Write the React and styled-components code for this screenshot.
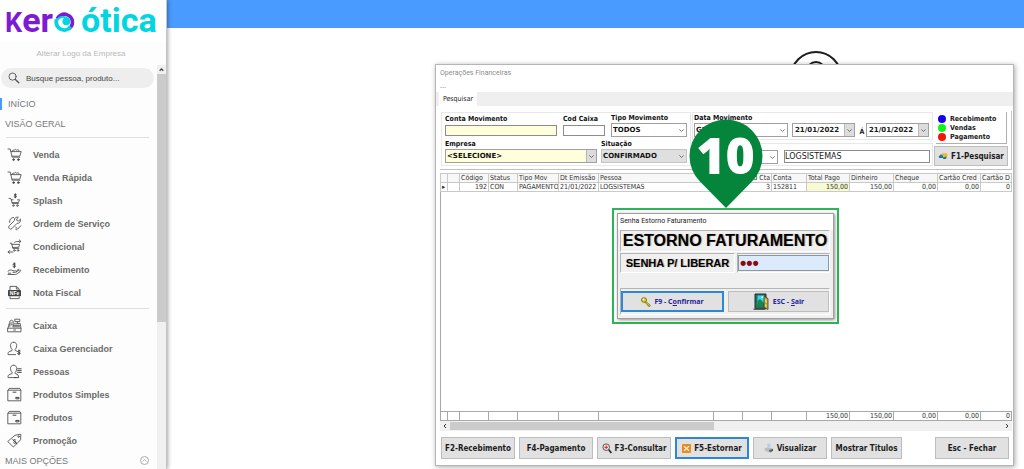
import React from "react";
import styled, { createGlobalStyle } from "styled-components";

const UI = '"DejaVu Sans Condensed", "DejaVu Sans", sans-serif';
const WIDE = '"DejaVu Sans", sans-serif';
const SANS = '"Liberation Sans", Arial, sans-serif';
const CAPTION = 'Roboto, "Open Sans", sans-serif';

const Global = createGlobalStyle`
  *, *::before, *::after { box-sizing: border-box; }
  html, body { margin: 0; padding: 0; background: #fff; }
  body { font-family: ${SANS}; color: #1a1a1a; overflow: hidden; }
  button, input, select { font: inherit; color: inherit; margin: 0; padding: 0; }
`;

const Page = styled.div`
  display: flex;
  height: 100vh;
  overflow: hidden;
`;

/* ---------- sidebar ---------- */

const Sidebar = styled.aside`
  position: relative;
  z-index: 1;
  flex: none;
  display: flex;
  flex-direction: column;
  width: 167px;
  background: #fdfdfd;
  border-right: 1px solid #c4c4c4;
  box-shadow: 1px 0 4px rgba(0, 0, 0, 0.35);
`;

const Brand = styled.div`
  display: flex;
  align-items: baseline;
  height: 41px;
  padding: 2px 0 0 5px;
  background: #fff;
  font-family: Roboto, sans-serif;
  font-weight: 700;
  font-size: 34px;
  line-height: 37px;
  color: #7d1bd2;
`;

const BrandCap = styled.span`
  font-size: 27px;
`;

const BrandAccent = styled.span`
  color: #00d5e2;
  margin-left: 6px;
`;

const BrandEye = styled.svg`
  flex: none;
  width: 21px;
  height: 21px;
  align-self: flex-start;
  margin: 9px 0 0 1px;
`;

const LogoLink = styled.a`
  height: 24px;
  padding-right: 4px;
  line-height: 25px;
  font-size: 8px;
  text-align: center;
  text-decoration: none;
  color: #b8b8b8;
`;

const SidebarBody = styled.div`
  flex: 1;
  min-height: 0;
  display: flex;
`;

const Menu = styled.nav`
  flex: 1;
  min-width: 0;
  padding-top: 3px;
`;

const Search = styled.label`
  display: flex;
  align-items: center;
  gap: 6px;
  height: 20px;
  margin: 0 3px 0 1px;
  padding: 0 7px;
  border-radius: 10px;
  background: #eeeeee;
`;

const SearchInput = styled.input`
  flex: 1;
  min-width: 0;
  border: 0;
  outline: 0;
  background: none;
  font-size: 8px;
  color: #555;
  &::placeholder { color: #444; opacity: 1; }
`;

const Section = styled.a`
  display: flex;
  align-items: center;
  justify-content: space-between;
  height: ${(p) => p.$h || 20}px;
  padding: 0 8px 0 5px;
  font-size: 9px;
  color: #777;
  text-decoration: none;
`;

const HomeLink = styled(Section)`
  height: 12px;
  margin: 10px 0 4px;
  padding-left: 6px;
  border-left: 2px solid #4a9bff;
`;

const Rule = styled.hr`
  height: 1px;
  margin: ${(p) => p.$m};
  border: 0;
  background: #dedede;
`;

const List = styled.ul`
  margin: 0;
  padding: 0;
  list-style: none;
`;

const Item = styled.a`
  display: flex;
  align-items: center;
  gap: 11px;
  height: 23px;
  padding-left: 7px;
  font-size: 9px;
  font-weight: 700;
  color: #6a6a6a;
  text-decoration: none;
  svg { flex: none; width: 15px; height: 15px; }
`;

const VScroll = styled.div`
  width: 9px;
  padding-top: 9px;
  background: #f0f0f0;
`;

const VScrollArrow = styled.svg`
  display: block;
  width: 9px;
  height: 9px;
  margin-top: -9px;
`;

const VThumb = styled.div`
  height: 248px;
  background: #cbcbcb;
`;

/* ---------- main area ---------- */

const Main = styled.main`
  position: relative;
  flex: 1;
  min-width: 0;
  display: flex;
  flex-direction: column;
`;

const TopBar = styled.header`
  flex: none;
  height: 28px;
  background: #4a9bff;
`;

const Emblem = styled.svg`
  position: absolute;
  top: 50px;
  right: 181px;
  width: 54px;
  height: 54px;
`;

const Desk = styled.div`
  display: flex;
  padding: 36px 10px 0 268px;
`;

const Win = styled.section`
  position: relative;
  flex: 1;
  min-width: 0;
  border: 1px solid #b5b5b5;
  background: #fff;
  box-shadow: 1px 1px 5px rgba(0, 0, 0, 0.35);
  font-family: ${UI};
`;

const WinTitle = styled.h1`
  margin: 0;
  padding-left: 4px;
  height: 17px;
  line-height: 17px;
  font-family: ${CAPTION};
  font-weight: 400;
  font-size: 7px;
  color: #8c8c8c;
`;

const WinMenu = styled.div`
  height: 10px;
  padding-left: 4px;
  line-height: 8px;
  font-size: 7px;
  color: #666;
`;

const Tabs = styled.div`
  display: flex;
  height: 14px;
  padding-left: 3px;
  background: #efefef;
`;

const Tab = styled.button`
  width: 38px;
  border: 0;
  background: #fff;
  font-size: 7px;
  color: #222;
`;

const WinBody = styled.div`
  padding: 5px 1px 6px 4px;
`;

const Filters = styled.form`
  display: flex;
  gap: 1px;
  height: 59px;
  padding: 1px 3px 0 1px;
  border-right: 1px solid #c8c8c8;
  border-bottom: 1px solid #c0c0c0;
`;

const Group = styled.div`
  flex: ${(p) => p.$flex || "none"};
  min-width: 0;
  display: flex;
  flex-direction: column;
  gap: ${(p) => p.$gap || 0}px;
  padding: ${(p) => p.$pad || "1px 3px"};
  border: ${(p) => (p.$plain ? "0" : "1px solid #e8e8e8")};
  height: ${(p) => (p.$h ? p.$h + "px" : "54px")};
`;

const Line = styled.div`
  display: flex;
  align-items: flex-end;
  gap: ${(p) => p.$gap}px;
`;

const Field = styled.label`
  flex: none;
  width: ${(p) => p.$w}px;
  display: flex;
  flex-direction: column;
  font-size: 7px;
  font-weight: 700;
  line-height: 9px;
  color: #111;
  white-space: nowrap;
`;

const TextBox = styled.input`
  width: ${(p) => (p.$w ? p.$w + "px" : "100%")};
  height: ${(p) => p.$h || 11}px;
  margin: 1px 0 !important;
  padding: 0 !important;
  border: 1px solid #8c8c8c;
  border-radius: 0;
  outline: 0;
  background: ${(p) => p.$bg || "#fff"};
  font-family: ${WIDE};
  font-size: 8px;
`;

const Combo = styled.span`
  flex: none;
  display: flex;
  width: ${(p) => (p.$w ? p.$w + "px" : "100%")};
  height: 14px;
  border: 1px solid ${(p) => (p.$grey ? "#c4c4c4" : "#a0a0a0")};
  background: ${(p) => p.$bg || "#fff"};
`;

const ComboSelect = styled.select`
  flex: 1;
  min-width: 0;
  padding-left: 1px !important;
  border: 0;
  outline: 0;
  appearance: none;
  background: none;
  font-family: ${WIDE};
  font-size: 7px;
  font-weight: 700;
  line-height: 11px;
`;

const ComboDate = styled.input`
  flex: 1;
  min-width: 0;
  padding-left: 2px !important;
  border: 0;
  outline: 0;
  background: none;
  font-family: ${WIDE};
  font-size: 7px;
  font-weight: 700;
`;

const ComboArrow = styled.span`
  flex: none;
  display: flex;
  align-items: center;
  justify-content: center;
  width: 10px;
  background: ${(p) => (p.$boxed ? "#dcdcdc" : "none")};
  border-left: ${(p) => (p.$boxed ? "1px solid #b8b8b8" : "0")};
  svg { width: 5px; height: 3px; }
`;

const Sep = styled.span`
  width: 6px;
  font-size: 7px;
  font-weight: 700;
  line-height: 10px;
  text-align: center;
`;

const Side = styled.div`
  flex: none;
  width: 74px;
  display: flex;
  flex-direction: column;
  gap: 2px;
`;

const Legend = styled.ul`
  margin: 0 1px 0 2px;
  padding: 2px 0 0 2px;
  height: 32px;
  list-style: none;
  border-right: 1px solid #b0b0b0;
  border-bottom: 1px solid #b0b0b0;
  font-size: 7px;
  font-weight: 700;
`;

const LegendItem = styled.li`
  display: flex;
  align-items: center;
  gap: 4px;
  height: 9px;
  &::before {
    content: "";
    width: 8px;
    height: 8px;
    border-radius: 4px;
    background: ${(p) => p.$c};
  }
`;

const Btn = styled.button`
  display: flex;
  align-items: center;
  justify-content: center;
  gap: 3px;
  flex: none;
  width: ${(p) => p.$w || 74}px;
  height: ${(p) => p.$h || 22}px;
  border: ${(p) => (p.$active ? "2px solid #2d86d6" : "1px solid #bdbdbd")};
  border-radius: 0;
  background: #e1e1e1;
  font-family: ${UI};
  font-size: 8px;
  font-weight: 700;
  color: #1c1c1c;
  white-space: nowrap;
  svg { flex: none; }
`;

const Grid = styled.table`
  width: 100%;
  margin-top: 3px;
  table-layout: fixed;
  border-collapse: collapse;
  border: 1px solid #a8a8a8;
  border-right: 0;
  font-size: 7px;
  line-height: 8px;
  color: #333;
`;

const Cell = styled.td`
  height: 9px;
  padding: 0 1px;
  border: 1px solid ${(p) => (p.$foot ? "#a8a8a8" : "#c9c9c9")};
  background: ${(p) => p.$bg || "#fff"};
  overflow: hidden;
  white-space: nowrap;
  font-weight: 400;
  text-align: ${(p) => (p.$num ? "right" : "left")};
`;

const Filler = styled.td`
  height: 220px;
  padding: 0;
`;

const HScroll = styled.div`
  display: flex;
  align-items: center;
  height: 10px;
  background: #f0f0f0;
  svg { flex: none; width: 10px; height: 8px; }
`;

const HThumb = styled.div`
  width: 264px;
  height: 8px;
  margin-right: auto;
  background: #cbcbcb;
`;

const Actions = styled.div`
  display: flex;
  gap: 4px;
  padding: 6px 3px 0 1px;
  & > :last-child { margin-left: auto; }
`;

/* ---------- callout and dialog ---------- */

const Overlay = styled.div`
  position: absolute;
  top: 54px;
  left: 0;
  right: 0;
  display: flex;
  flex-direction: column;
  align-items: center;
  padding-left: 2px;
`;

const Pin = styled.div`
  position: relative;
  width: 74px;
  height: 89px;
  text-align: center;
  font-family: "Open Sans", sans-serif;
  font-weight: 800;
  font-size: 50px;
  line-height: 73px;
  color: #fff;
  svg { position: absolute; inset: 0; }
  span { position: relative; }
`;

const Highlight = styled.div`
  width: 227px;
  padding: 3px;
  border: 2px solid #2db457;
  background: #fff;
`;

const Dialog = styled.section`
  border: 1px solid #a0a0a0;
  background: #f0f0f0;
  box-shadow: 1px 1px 3px rgba(0, 0, 0, 0.45);
  padding-bottom: 3px;
`;

const DialogTitle = styled.h2`
  margin: 0;
  height: 16px;
  padding-left: 2px;
  background: #fff;
  font-family: ${CAPTION};
  font-weight: 400;
  font-size: 7px;
  line-height: 14px;
  color: #222;
`;

const Panel = styled.div`
  display: flex;
  align-items: center;
  justify-content: center;
  flex: ${(p) => p.$flex || "none"};
  height: ${(p) => p.$h}px;
  border-top: 1px solid #b4b4b4;
  border-left: 1px solid #b4b4b4;
  border-right: 1px solid #fff;
  border-bottom: 1px solid #fff;
  font-family: ${SANS};
  font-weight: 700;
  font-size: ${(p) => p.$size || 11}px;
  color: #000;
  text-shadow: 1px 0 1px rgba(0, 0, 0, 0.3);
  white-space: nowrap;
  gap: 4px;
`;

const DialogBody = styled.div`
  display: flex;
  flex-direction: column;
  padding: 0 3px 0 2px;
`;

const PasswordRow = styled.div`
  display: flex;
  gap: 2px;
  margin: 1px 0 15px;
`;

const Password = styled.input`
  width: 91px;
  height: 16px;
  padding: 0 1px !important;
  border: 1px solid #8a96a3;
  border-radius: 0;
  outline: 0;
  background: #dcebfc;
  font-family: ${SANS};
  font-size: 18px !important;
  line-height: 14px;
  color: #8b0b0b;
`;

const DialogBtn = styled(Btn)`
  flex: 1;
  height: 21px;
  font-family: "Noto Sans", sans-serif;
  font-size: 7px;
  color: #25259a;
`;

/* ---------- icons ---------- */

const Ico = ({ children }) => (
  <svg viewBox="0 0 15 15" fill="none" stroke="#555" strokeWidth="0.9" strokeLinecap="round" strokeLinejoin="round" aria-hidden="true">
    {children}
  </svg>
);

const Cart = () => (
  <Ico>
    <path d="M1 2h2.2l2 8.2h7.6M3.8 4.6h10.4l-1.4 4.6H5" />
    <path d="M5 4.4c.2-1.6 1.6-1.6 2.1-.8.5-1.6 2.2-1.5 2.6-.2.7-1.2 2.4-.8 2.6 1" />
    <circle cx="6.6" cy="12.6" r="0.9" fill="#444" />
    <circle cx="11.4" cy="12.6" r="0.9" fill="#444" />
  </Ico>
);

const Splash = () => (
  <Ico>
    <path d="M2 5.4h1.8l1.5 5.2h6.2M4.4 6.8h1.8M10.600 6.8h2l-1.200 2.800H5.200" />
    <path stroke="#333" d="M9.4 1.600c-.9-.6-2.200-.3-2 .6.200.8 1.900.5 2 1.400.1.900-1.400 1-2.200.4M8.300.8v4" />
    <circle cx="6.4" cy="12.6" r="0.8" />
    <circle cx="10.4" cy="12.6" r="0.8" />
  </Ico>
);

const Tools = () => (
  <Ico>
    <path d="M13.400 3.400L11.600 5 10 4.600 9.600 3l1.800-1.700C9.200.5 7 2.200 7.400 4.600L2.200 9.800a1.900 1.900 0 0 0 2.700 2.700l5.200-5.200c2.400.4 4.100-1.700 3.300-3.900z" />
    <path d="M6.600 1.400C4 1.600 2.200 3.600 2.600 6.400M8.800 11l1.800 2.200 3.200-3.400M8.600 13.200l1.200.8" />
  </Ico>
);

const Conditional = () => (
  <Ico>
    <path d="M3.200 4.200h1.400l1.200 5.200h6M4.8 5.400h7.800l-1 3H5.600M7 3.800C8 2.600 9 2.400 13.600 2.400M12.200.9l1.800 1.500-1.800 1.500M6 13H1.200M2.800 11.5L1 13l1.800 1.500" />
    <circle cx="7.4" cy="11.4" r="0.8" />
    <circle cx="11" cy="11.4" r="0.8" />
  </Ico>
);

const Hand = () => (
  <Ico>
    <path d="M1 9.200c1.800-1.600 3.600-1.600 5-.4h2.800c1.200 0 1.200 1.500 0 1.500H6M9.400 9.600l3.200-1.500c1.200-.4 1.600.6.8 1.200-2 1.600-3.600 3-5 3.200H1M1.400 11.200h2.400M10 8.200l1.600-.9" />
    <path stroke="#333" d="M8.400 1.900c-1-.7-2.400-.3-2.200.6.2.9 2.200.6 2.300 1.600.1 1-1.600 1.100-2.500.4M7.300.8v5" />
  </Ico>
);

const Invoice = () => (
  <svg viewBox="0 0 15 15" aria-hidden="true">
    <path d="M3 5V1.400h6.600L12.200 4v1M3 11.400v2.200h9.200v-2.200M9.400 1.600V4h2.400" fill="none" stroke="#555" strokeWidth="0.9" />
    <rect x="1" y="5" width="13" height="6.200" rx="0.8" fill="#444" />
    <text x="7.500" y="9.800" textAnchor="middle" fontFamily="Liberation Sans" fontWeight="700" fontSize="5" fill="#fff">NFe</text>
  </svg>
);

const Register = () => (
  <Ico>
    <path d="M1 10.200h13v3.600H1zM1 10.200l1.200-4.600M14 10.200l-.8-4.800h-1.600M6.400 7.400h6M6 8.800h6.600M7.400 5.800h4.400M8.200 1.200h4.600v2.400H8.200zM10.400 3.600v2M2.800 8.400V3.200l1.600-1 1.800 1v5M3.800 5h1.400M3.800 6.800h1.400M6.600 12h2" />
  </Ico>
);

const Person = ({ extra }) => (
  <Ico>
    <path d="M6.600 1.200c2 0 3.200 1.400 3.100 3.400-.1 2-1 3.400-1.600 3.900v.9l2 .9M6.600 1.200c-2 0-3.200 1.400-3.100 3.400.1 2 1 3.400 1.600 3.900v1L2 10.800c-.8.4-1 1.200-1 2.800h7.600" />
    {extra}
  </Ico>
);

const CashierManager = () => (
  <Person
    extra={<path stroke="#333" d="M13.200 9.900c-1-.6-2.600-.3-2.400.7.2.9 2.400.6 2.500 1.600.1 1-1.800 1.100-2.700.4M12 9v4.800" />}
  />
);

const People = () => <Person extra={<path stroke="#333" d="M10.600 4.800h3.600M10.600 6.600h3.600M10.600 8.400h3.600M8 13.600h3.600c0-1.800-.4-2.600-1.500-3.200" />} />;

const Box = () => (
  <Ico>
    <path d="M1.200 3.200h12.600v10.600H1.200zM1.200 3.200l1-1.800h10.600l1 1.800" />
    <path stroke="#333" d="M6 5.200h3M9.200 10.400h2.800v1.400H9.200z" />
  </Ico>
);

const Tag = () => (
  <Ico>
    <path d="M8.400 2.200L13.800 1.200 13.600 6.800 6.400 14 1 8.800z" />
    <circle cx="11.600" cy="3.600" r="0.800" />
    <path stroke="#333" d="M8.600 7c-.9-1-2.500-.2-2 .9.500 1 1.900.2 2.300 1.200.4 1.100-1.300 1.900-2.300.8M5.800 6.400l4 4.400" />
  </Ico>
);

const Chevron = () => (
  <svg viewBox="0 0 5 3" fill="none" stroke="#555" strokeWidth="0.8" aria-hidden="true">
    <path d="M0.400 0.400L2.500 2.500 4.600 0.400" />
  </svg>
);

const SearchGlyph = () => (
  <svg width="12" height="12" viewBox="0 0 12 12" fill="none" stroke="#555" strokeLinecap="round" aria-hidden="true">
    <circle cx="4.600" cy="4.600" r="3.600" strokeWidth="0.900" />
    <path d="M7.400 7.400l3.400 3.400" strokeWidth="1.400" />
  </svg>
);

const Binocular = () => (
  <svg width="10" height="8" viewBox="0 0 10 8" aria-hidden="true">
    <path d="M0.500 5L2.500 2.600h2.300L5.500 6H1.500z" fill="#17799b" />
    <path d="M3.600 2.400L5 .8l1.600.8L8 .8l1.600 1.800L9 5 6.400 5.800z" fill="#f2b632" />
    <path d="M4.800 5.400L8.800 4.600 8 7H5.200z" fill="#17799b" />
  </svg>
);

const Magnifier = () => (
  <svg width="10" height="11" viewBox="0 0 10 11" fill="none" aria-hidden="true">
    <circle cx="4.200" cy="4.200" r="3.300" stroke="#444" strokeWidth="0.900" fill="#f6eaea" />
    <path d="M4.200 2.400v3.600M2.400 4.200h3.600" stroke="#d22" strokeWidth="1.100" />
    <path d="M6.800 6.800l2.600 3.200" stroke="#222" strokeWidth="1.600" />
  </svg>
);

const Reverse = () => (
  <svg width="9" height="9" viewBox="0 0 9 9" aria-hidden="true">
    <rect width="9" height="9" rx="1" fill="#ea8a1e" />
    <path d="M2 2.200l5 4.600M7 2.200L2 6.800" stroke="#fff3d8" strokeWidth="1.200" />
  </svg>
);

const Preview = () => (
  <svg width="10" height="10" viewBox="0 0 10 10" aria-hidden="true">
    <path d="M3 1l3-.6.8 3.400-3 .8z" fill="#a9d3ef" />
    <path d="M.6 5.600L4 4.200l4.600 1.200v2L5 9.200.8 7.600z" fill="#b9bcc0" />
    <path d="M5 7.200l3.800-1.400.4 2L6 9.600z" fill="#5d6063" />
  </svg>
);

const Key = () => (
  <svg width="10" height="10" viewBox="0 0 10 10" aria-hidden="true">
    <path d="M4.600 4.200l4.600 4-.4 1.300-1.300-.2-.2-1-1-.1-.2-1.100-2.400-1.700z" fill="#e8d51e" stroke="#55500a" strokeWidth="0.600" />
    <ellipse cx="3" cy="3" rx="2.600" ry="2.300" fill="#e8d51e" stroke="#55500a" strokeWidth="0.700" />
    <circle cx="2.300" cy="2.300" r="0.700" fill="#fff" />
  </svg>
);

const Door = () => (
  <svg width="17" height="18" viewBox="0 0 17 18" aria-hidden="true">
    <path d="M2 1h11v14.500H2z" fill="#2f6b5c" stroke="#12342c" />
    <path d="M4.500 2.500h6.500v9H4.500z" fill="#37d8ee" />
    <path d="M4.500 8l2.500-2 4 4v3.500H4.500z" fill="#138a4a" />
    <circle cx="9.500" cy="4.200" r="1" fill="#fff" />
    <path d="M11 3.500l4 2v11l-4-2z" fill="#b9a24a" stroke="#4c3f12" strokeWidth="0.800" />
    <path d="M12.200 6l1.600 1v3l-1.600-1zM12.200 10.800l1.600 1v2.400l-1.600-1z" fill="#e6d488" />
    <path d="M.5 15.500h12v1.500H.5z" fill="#5a5d60" />
  </svg>
);

/* ---------- data ---------- */

const sales = [
  ["Venda", Cart],
  ["Venda Rápida", Cart],
  ["Splash", Splash],
  ["Ordem de Serviço", Tools],
  ["Condicional", Conditional],
  ["Recebimento", Hand],
  ["Nota Fiscal", Invoice],
];

const records = [
  ["Caixa", Register],
  ["Caixa Gerenciador", CashierManager],
  ["Pessoas", People],
  ["Produtos Simples", Box],
  ["Produtos", Box],
  ["Promoção", Tag],
];

const columns = [
  { w: 7, head: "", cell: "▸", foot: "" },
  { w: 12, head: "", cell: "", foot: "" },
  { w: 29, head: "Código", cell: "192", foot: "", num: true },
  { w: 29, head: "Status", cell: "CON", foot: "" },
  { w: 41, head: "Tipo Mov", cell: "PAGAMENTO", foot: "" },
  { w: 40, head: "Dt Emissão", cell: "21/01/2022", foot: "" },
  { w: 115, head: "Pessoa", cell: "LOGSISTEMAS", foot: "" },
  { w: 29, head: "", cell: "", foot: "" },
  { w: 29, head: "d Cta", headRight: true, cell: "3", foot: "", num: true },
  { w: 35, head: "Conta", cell: "152811", foot: "" },
  { w: 43, head: "Total Pago", cell: "150,00", foot: "150,00", num: true, bg: "#f8fbd2" },
  { w: 44, head: "Dinheiro", cell: "150,00", foot: "150,00", num: true },
  { w: 44, head: "Cheque", cell: "0,00", foot: "0,00", num: true },
  { w: 43, head: "Cartão Cred", cell: "0,00", foot: "0,00", num: true },
  { head: "Cartão D", cell: "0", foot: "0", num: true },
];

const MenuList = ({ items }) => (
  <List>
    {items.map(([label, Icon]) => (
      <li key={label}>
        <Item href="#"><Icon />{label}</Item>
      </li>
    ))}
  </List>
);

const SelectBox = ({ w, bg, grey, boxed, value, label }) => (
  <Combo $w={w} $bg={bg} $grey={grey}>
    <ComboSelect defaultValue={value} aria-label={label}>
      <option>{value}</option>
    </ComboSelect>
    <ComboArrow $boxed={boxed}><Chevron /></ComboArrow>
  </Combo>
);

const DateBox = ({ label }) => (
  <Combo $w={63}>
    <ComboDate defaultValue="21/01/2022" aria-label={label} />
    <ComboArrow $boxed><Chevron /></ComboArrow>
  </Combo>
);

export default function App() {
  return (
    <>
      <Global />
      <Page>
        <Sidebar>
          <Brand>
            <BrandCap>K</BrandCap>
            <span>er</span>
            <BrandEye viewBox="0 0 20 20" fill="none" aria-hidden="true">
              <path d="M3 7.500C4.500 4.300 8 2.400 11.500 3.200 15.200 4.200 17.600 7.200 17.600 10.800c0 2.800-1.500 5-3.800 6.400" stroke="#7d1bd2" strokeWidth="3.400" />
              <path d="M2.400 8c-.8 4 .6 7.600 4 9.300 3.600 1.700 7.500.6 9.400-2.300" stroke="#00d5e2" strokeWidth="3.600" />
              <path d="M2 9.500C4.500 6 8 4.800 12.500 6.500" stroke="#00d5e2" strokeWidth="1.800" />
              <circle cx="11.800" cy="9.800" r="3.700" fill="#00d5e2" />
            </BrandEye>
            <BrandAccent>ótica</BrandAccent>
          </Brand>
          <LogoLink href="#">Alterar Logo da Empresa</LogoLink>
          <SidebarBody>
            <Menu>
              <Search>
                <SearchGlyph />
                <SearchInput type="text" placeholder="Busque pessoa, produto..." aria-label="Busque pessoa, produto" />
              </Search>
              <HomeLink href="#">INÍCIO</HomeLink>
              <Section href="#">VISÃO GERAL</Section>
              <Rule $m="3px 8px 5px 6px" />
              <MenuList items={sales} />
              <Rule $m="4px 8px 5px 6px" />
              <MenuList items={records} />
              <Section href="#" $h={17}>
                MAIS OPÇÕES
                <svg width="9" height="9" viewBox="0 0 9 9" fill="none" stroke="#999" strokeWidth="0.800" aria-hidden="true">
                  <circle cx="4.500" cy="4.500" r="4" />
                  <path d="M2.600 5.300l1.900-1.800 1.900 1.800" />
                </svg>
              </Section>
            </Menu>
            <VScroll>
              <VScrollArrow viewBox="0 0 9 9" fill="none" stroke="#444" strokeWidth="1.300" aria-hidden="true">
                <path d="M2.700 5.700l1.800-1.800 1.800 1.800" />
              </VScrollArrow>
              <VThumb />
            </VScroll>
          </SidebarBody>
        </Sidebar>

        <Main>
          <TopBar />
          <Emblem viewBox="0 0 54 54" fill="none" stroke="#1d1d1d" strokeWidth="2" aria-hidden="true">
            <circle cx="27" cy="27" r="25" />
            <circle cx="27" cy="21" r="9" />
          </Emblem>
          <Desk>
            <Win>
              <WinTitle>Operações Financeiras</WinTitle>
              <WinMenu>...</WinMenu>
              <Tabs role="tablist">
                <Tab type="button" role="tab" aria-selected="true">Pesquisar</Tab>
              </Tabs>
              <WinBody>
                <Filters onSubmit={(e) => e.preventDefault()}>
                  <Group $gap={3}>
                    <Line $gap={6}>
                      <Field $w={112}>Conta Movimento<TextBox $bg="#ffffdc" /></Field>
                      <Field $w={42}>Cod Caixa<TextBox /></Field>
                      <Field $w={76}>Tipo Movimento<SelectBox value="TODOS" /></Field>
                    </Line>
                    <Line $gap={4}>
                      <Field $w={152}>Empresa<SelectBox value="<SELECIONE>" bg="#ffffdc" boxed /></Field>
                      <Field $w={86}>Situação<SelectBox value="CONFIRMADO" bg="#dfdfdf" grey /></Field>
                    </Line>
                  </Group>
                  <Group $flex="1" $plain $gap={3} $pad="0">
                    <Group $h={28} $pad="1px 1px 0">
                      <Line $gap={4}>
                        <Field $w={94}>Data Movimento<SelectBox value="GERAL" /></Field>
                        <DateBox label="Data inicial" />
                        <Line $gap={1}>
                          <Sep>Á</Sep>
                          <DateBox label="Data final" />
                        </Line>
                      </Line>
                    </Group>
                    <Group $h={23} $pad="5px 1px 0">
                      <Line $gap={6}>
                        <SelectBox w={84} value="PESSOA" label="Tipo de busca" />
                        <TextBox $w={146} $h={13} defaultValue="LOGSISTEMAS" aria-label="Pessoa" />
                      </Line>
                    </Group>
                  </Group>
                  <Side>
                    <Legend>
                      <LegendItem $c="#1400f0">Recebimento</LegendItem>
                      <LegendItem $c="#0cf51a">Vendas</LegendItem>
                      <LegendItem $c="#f81405">Pagamento</LegendItem>
                    </Legend>
                    <Btn $h={20} type="submit"><Binocular />F1-Pesquisar</Btn>
                  </Side>
                </Filters>

                <Grid>
                  <colgroup>
                    {columns.map((c, i) => <col key={i} width={c.w} />)}
                  </colgroup>
                  <thead>
                    <tr>{columns.map((c, i) => <Cell as="th" key={i} $num={c.headRight} $bg="#f7f7f7">{c.head}</Cell>)}</tr>
                  </thead>
                  <tbody>
                    <tr>{columns.map((c, i) => <Cell key={i} $num={c.num} $bg={c.bg}>{c.cell}</Cell>)}</tr>
                    <tr><Filler colSpan={columns.length} /></tr>
                  </tbody>
                  <tfoot>
                    <tr>{columns.map((c, i) => <Cell key={i} $foot $num={c.num}>{c.foot}</Cell>)}</tr>
                  </tfoot>
                </Grid>
                <HScroll>
                  <svg viewBox="0 0 10 8" fill="none" stroke="#333" aria-hidden="true"><path d="M6 2L4 4l2 2" /></svg>
                  <HThumb />
                  <svg viewBox="0 0 10 8" fill="none" stroke="#333" aria-hidden="true"><path d="M4 2l2 2-2 2" /></svg>
                </HScroll>

                <Actions>
                  <Btn>F2-Recebimento</Btn>
                  <Btn>F4-Pagamento</Btn>
                  <Btn><Magnifier />F3-Consultar</Btn>
                  <Btn $active><Reverse />F5-Estornar</Btn>
                  <Btn><Preview />Visualizar</Btn>
                  <Btn $w={71}>Mostrar Titulos</Btn>
                  <Btn>Esc - Fechar</Btn>
                </Actions>
              </WinBody>

              <Overlay>
                <Pin>
                  <svg width="74" height="89" viewBox="0 0 74 89" aria-hidden="true">
                    <path d="M37 89L11.200 62.800A36.500 36.500 0 1 1 62.800 62.800z" fill="#05853c" />
                  </svg>
                  <span>10</span>
                </Pin>
                <Highlight>
                  <Dialog role="dialog" aria-label="Senha Estorno Faturamento">
                    <DialogTitle>Senha Estorno Faturamento</DialogTitle>
                    <DialogBody>
                      <Panel $h={22} $size={16}>ESTORNO FATURAMENTO</Panel>
                      <PasswordRow>
                        <Panel as="label" htmlFor="senha" $flex="1" $h={20}>SENHA P/ LIBERAR</Panel>
                        <Panel $h={20}><Password id="senha" type="password" defaultValue="123" /></Panel>
                      </PasswordRow>
                      <Panel $h={27}>
                        <DialogBtn $active type="button"><Key /><span>F9 - C<u>o</u>nfirmar</span></DialogBtn>
                        <DialogBtn type="button"><Door /><span>ESC - <u>S</u>air</span></DialogBtn>
                      </Panel>
                    </DialogBody>
                  </Dialog>
                </Highlight>
              </Overlay>
            </Win>
          </Desk>
        </Main>
      </Page>
    </>
  );
}
